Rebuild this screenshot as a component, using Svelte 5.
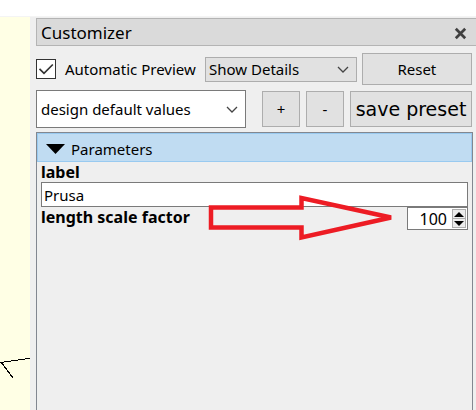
<script>
  let automatic = $state(true);
  let detail = $state('Show Details');
  let preset = $state('design default values');
  let open = $state(true);
  let label = $state('Prusa');
  let factor = $state(100);
</script>

<div class="window">
  <div class="toolbar"></div>
  <div class="workspace">
    <div class="viewport">
      <svg width="30" height="32" viewBox="0 0 30 32" shape-rendering="crispEdges" aria-hidden="true">
        <path d="M0 10.5H4M4 9.5H11M11 8.5H18M18 7.5H25M25 6.5H30" stroke="#000" fill="none" />
        <path d="M1 10L13 26" stroke="#000" fill="none" />
      </svg>
    </div>
    <section class="dock">
      <header class="title">
        <span>Customizer</span>
        <button class="close" aria-label="Close">
          <svg width="13" height="13" viewBox="0 0 13 13"><path d="M1.8 1.8L11.2 11.2M11.2 1.8L1.8 11.2" stroke="#404040" stroke-width="2.7" /></svg>
        </button>
      </header>

      <div class="row options">
        <label class="auto">
          <span class="tick">
            <input type="checkbox" bind:checked={automatic} />
            {#if automatic}
              <svg width="20" height="20" viewBox="0 0 20 20" aria-hidden="true"><path d="M3.5 9.8L8 14.3L16.8 5.5" stroke="#333" stroke-width="1.7" fill="none" /></svg>
            {/if}
          </span>
          Automatic Preview
        </label>
        <div class="select details">
          <select aria-label="Detail level" bind:value={detail}>
            <option>Show Details</option>
          </select>
          <svg width="12" height="7" viewBox="0 0 12 7" aria-hidden="true"><path d="M1 1L6 6L11 1" stroke="#444" stroke-width="1.3" fill="none" /></svg>
        </div>
        <button class="push reset">Reset</button>
      </div>

      <div class="row presets">
        <div class="select preset">
          <select aria-label="Preset" bind:value={preset}>
            <option>design default values</option>
          </select>
          <svg width="12" height="7" viewBox="0 0 12 7" aria-hidden="true"><path d="M1 1L6 6L11 1" stroke="#444" stroke-width="1.3" fill="none" /></svg>
        </div>
        <button class="push small">+</button>
        <button class="push small">-</button>
        <button class="push save">save preset</button>
      </div>

      <div class="panel">
        <button class="group" aria-expanded={open} onclick={() => (open = !open)}>
          <svg width="20" height="10" viewBox="0 0 20 10" aria-hidden="true"><path d="M0 0H19L9.5 10Z" /></svg>
          Parameters
        </button>
        {#if open}
          <div class="fields">
            <label class="name" for="label">label</label>
            <input id="label" class="text" type="text" bind:value={label} />
            <div class="number">
              <label class="name" for="factor">length scale factor</label>
              <div class="spin">
                <input id="factor" type="number" bind:value={factor} />
                <div class="steps">
                  <button aria-label="Increase" onclick={() => factor++}>
                    <svg width="10" height="5" viewBox="0 0 10 5"><path d="M0 5L5 0L10 5Z" /></svg>
                  </button>
                  <button aria-label="Decrease" onclick={() => factor--}>
                    <svg width="10" height="5" viewBox="0 0 10 5"><path d="M0 0L5 5L10 0Z" /></svg>
                  </button>
                </div>
              </div>
              <svg class="arrow" width="186" height="46" viewBox="0 0 186 46" aria-hidden="true">
                <path d="M3 12.5H93.5V3L183 22.5L93.5 42.5V32.5H3Z" fill="none" stroke="#ed1c24" stroke-width="4.5" />
              </svg>
            </div>
          </div>
        {/if}
      </div>
    </section>
  </div>
</div>

<style>
  :global(body) {
    margin: 0;
  }
  .window {
    display: flex;
    flex-direction: column;
    height: 100vh;
    overflow: hidden;
    background: #efefef;
    color: #000;
    font: 15px/20px "Noto Sans", "Open Sans", sans-serif;
  }
  .window * {
    box-sizing: border-box;
  }
  button,
  input,
  select {
    margin: 0;
    padding: 0;
    border: 0;
    border-radius: 0;
    color: inherit;
    font: inherit;
    appearance: none;
  }
  svg {
    display: block;
    flex: none;
  }
  .toolbar {
    flex: none;
    height: 17px;
    background: #fff;
    border-bottom: 1px solid #f4f4f4;
  }
  .workspace {
    flex: 1;
    display: flex;
    min-height: 0;
  }
  .viewport {
    flex: none;
    display: flex;
    align-items: flex-end;
    width: 30px;
    padding-bottom: 26px;
    background: #ffffe5;
  }
  .dock {
    flex: 1;
    min-width: 0;
    display: flex;
    flex-direction: column;
    padding: 1px 0 0 6px;
  }
  .title {
    display: flex;
    align-items: center;
    justify-content: space-between;
    height: 28px;
    padding: 2px 9px 0 4px;
    border: 1px solid #b4b4b4;
    border-right: 0;
    background: #dadada;
    font-size: 17px;
  }
  .close {
    background: none;
  }
  .row {
    display: flex;
    align-items: center;
    margin-right: 4px;
  }
  .options {
    height: 32px;
    margin-top: 7px;
  }
  .auto {
    flex: none;
    display: flex;
    align-items: center;
    gap: 9px;
    width: 169px;
    white-space: nowrap;
  }
  .tick {
    display: grid;
  }
  .tick > * {
    grid-area: 1 / 1;
  }
  .tick input {
    width: 20px;
    height: 20px;
    border: 1px solid #333;
    background: #fff;
  }
  .tick svg {
    pointer-events: none;
  }
  .select {
    display: grid;
    align-items: center;
    border: 1px solid #adadad;
    background: #e1e1e1;
  }
  .select > * {
    grid-area: 1 / 1;
  }
  .select select {
    width: 100%;
    height: 100%;
    padding: 0 22px 0 3px;
    background: transparent;
  }
  .select svg {
    justify-self: end;
    margin-right: 7px;
    pointer-events: none;
  }
  .details {
    flex: 152;
    height: 25px;
  }
  .push {
    border: 1px solid #adadad;
    background: #e1e1e1;
  }
  .reset {
    flex: 110;
    height: 32px;
    margin-left: 5px;
  }
  .presets {
    gap: 6px;
    margin-top: 5px;
  }
  .preset {
    flex: 1;
    height: 38px;
    margin-right: 10px;
    border-color: #7a7a7a;
    background: #fff;
  }
  .preset select {
    padding-left: 4px;
  }
  .small {
    width: 38px;
    height: 36px;
  }
  .save {
    width: 122px;
    height: 36px;
    font-family: "DejaVu Sans", sans-serif;
    font-size: 19px;
    white-space: nowrap;
  }
  .panel {
    flex: 1;
    margin: 4px 3px 0 0;
    border: 1px solid #828790;
    border-bottom: 0;
  }
  .group {
    display: flex;
    align-items: center;
    gap: 5px;
    width: 100%;
    height: 29px;
    padding: 3px 0 0 8px;
    border: 1px solid #99caf0;
    background: #c0dcf2;
  }
  .fields {
    padding: 0 4px;
  }
  .name {
    display: block;
    font-size: 16px;
    font-weight: bold;
  }
  .text {
    display: block;
    width: 100%;
    height: 25px;
    padding: 0 2px;
    border: 1px solid #7a7a7a;
    background: #fff;
  }
  .number {
    position: relative;
    display: flex;
    justify-content: space-between;
  }
  .spin {
    display: flex;
    width: 61px;
    height: 23px;
    padding: 1px;
    border: 1px solid #7a7a7a;
    background: #fff;
  }
  .spin input {
    flex: 1;
    min-width: 0;
    padding-right: 5px;
    background: #fff;
    font-size: 16px;
    text-align: right;
    appearance: textfield;
  }
  .spin input::-webkit-inner-spin-button {
    appearance: none;
  }
  .steps {
    display: flex;
    flex-direction: column;
    width: 14px;
    border: 1px solid #adadad;
  }
  .steps button {
    flex: 1;
    display: flex;
    align-items: center;
    justify-content: center;
    min-height: 0;
    background: #ececec;
  }
  .steps button + button {
    border-top: 1px solid #adadad;
  }
  .arrow {
    position: absolute;
    top: -12px;
    right: 74px;
    pointer-events: none;
  }
</style>
